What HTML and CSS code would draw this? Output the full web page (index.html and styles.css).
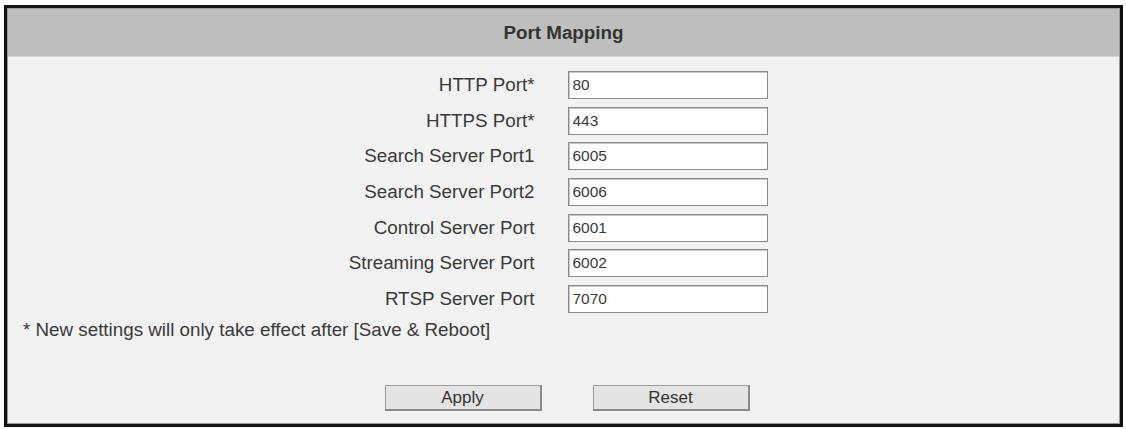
FILE: index.html
```html
<!DOCTYPE html>
<html lang="en">

<head>
    <meta charset="UTF-8">
    <meta name="viewport" content="width=device-width, initial-scale=1.0">
    <title>Port Mapping</title>
    <link rel="stylesheet" href="styles.css">
</head>

<body>
    <div class="panel">
        <div class="panel-title">Port Mapping</div>
        <div class="panel-body">
            <div class="port-form">
                <label class="port-label">HTTP Port*</label>
                <input class="port-input" type="text" value="80">
                <label class="port-label">HTTPS Port*</label>
                <input class="port-input" type="text" value="443">
                <label class="port-label">Search Server Port1</label>
                <input class="port-input" type="text" value="6005">
                <label class="port-label">Search Server Port2</label>
                <input class="port-input" type="text" value="6006">
                <label class="port-label">Control Server Port</label>
                <input class="port-input" type="text" value="6001">
                <label class="port-label">Streaming Server Port</label>
                <input class="port-input" type="text" value="6002">
                <label class="port-label">RTSP Server Port</label>
                <input class="port-input" type="text" value="7070">
            </div>
            <p class="note">* New settings will only take effect after [Save &amp; Reboot]</p>
            <div class="actions">
                <button class="btn" type="button">Apply</button>
                <button class="btn" type="button">Reset</button>
            </div>
        </div>
    </div>
</body>

</html>
```

FILE: styles.css
```css
* {
    padding: 0;
    margin: 0;
    box-sizing: border-box;
}

body {
    background-color: #fff;
    font-family: "Liberation Sans", Arial, sans-serif;
    color: #333;
}

.panel {
    width: 1119px;
    margin: 5px 0 0 4px;
    border: 3px solid #111;
    box-shadow: inset 0 0 0 1px #9a9a9a;
    background-color: #f2f2f2;
}

.panel-title {
    height: 48px;
    line-height: 47px;
    margin: 1px 1px 0;
    background-color: #bebebe;
    border-bottom: 1px solid #d6d6d6;
    text-align: center;
    font-size: 18.8px;
    font-weight: bold;
    color: #333;
}

.panel-body {
    padding: 14px 1px 13px;
}

.port-form {
    display: grid;
    grid-template-columns: 1fr 1fr;
    row-gap: 7.7px;
    align-items: center;
}

.port-label {
    text-align: right;
    padding-right: 29px;
    font-size: 18.8px;
    color: #3a3a3a;
}

.port-input {
    width: 200px;
    height: 28px;
    margin-left: 4px;
    padding: 0 4px;
    border: 1px solid #8a8a8a;
    box-shadow: inset 1px 1px 0 #c8c8c8;
    background-color: #fff;
    font-family: "Liberation Sans", Arial, sans-serif;
    font-size: 15.5px;
    color: #3a3a3a;
}

.note {
    margin: 7px 0 0 15px;
    line-height: 20px;
    font-size: 18.8px;
    color: #3a3a3a;
}

.actions {
    display: flex;
    justify-content: center;
    gap: 51px;
    margin-top: 45px;
    padding-left: 7px;
}

.btn {
    width: 157px;
    height: 26px;
    border: 1px solid #9e9e9e;
    border-right: 2px solid #8a8a8a;
    border-bottom: 2px solid #8a8a8a;
    background-color: #e4e4e4;
    font-family: "Liberation Sans", Arial, sans-serif;
    font-size: 17px;
    color: #333;
}
```
